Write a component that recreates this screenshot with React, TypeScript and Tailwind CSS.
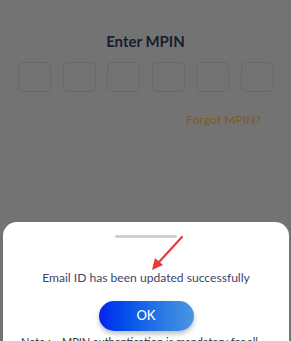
import React from "react";

function PinBox() {
  return <div className="h-[30px] w-[33px] rounded-[5px] border border-[#686868]" />;
}

export default function App() {
  return (
    <div className="relative flex h-[341px] w-[291px] flex-col overflow-hidden bg-[#737373] font-['Lato',sans-serif]">
      <div className="flex h-[222px] shrink-0 flex-col items-center pt-[31px]">
        <h1 className="text-[15px] leading-[20px] font-bold text-[#181c30]">Enter MPIN</h1>
        <div className="mt-[11px] flex gap-[11.5px] pl-[1px]">
          {[0, 1, 2, 3, 4, 5].map((i) => (
            <PinBox key={i} />
          ))}
        </div>
        <p className="mt-[19px] self-end pr-[30px] text-[12.2px] leading-[18px] text-[#7a5c22]">Forgot MPIN?</p>
      </div>

      <div className="ml-[3px] mr-[2px] flex shrink-0 flex-col items-center rounded-t-[14px] bg-white pt-[13px]">
        <div className="h-[3px] w-[62px] rounded-full bg-[#d0d0d0]" />
        <p className="mt-[31px] text-[12.1px] leading-[17px] text-[#3b4668]">Email ID has been updated successfully</p>
        <button className="mt-[15px] flex h-[30px] w-[95px] shrink-0 items-center justify-center rounded-full bg-gradient-to-r from-[#0a20ec] to-[#4b95e0] text-[13px] font-medium text-white shadow-[0_3px_5px_rgba(0,0,0,0.25)]">
          OK
        </button>
        <p className="mt-[3px] self-start pl-[18px] text-[11px] leading-[16px] whitespace-nowrap text-[#333]">
          Note :&nbsp;&nbsp;&nbsp;&nbsp;MPIN authentication is mandatory for all
        </p>
      </div>

      <svg className="absolute left-0 top-0" width="291" height="341" viewBox="0 0 291 341">
        <line x1="182" y1="237" x2="159" y2="262" stroke="#e83a3a" strokeWidth="2.2" strokeLinecap="round" />
        <polygon points="152,270 155,258 163,265" fill="#e83a3a" />
      </svg>
    </div>
  );
}
